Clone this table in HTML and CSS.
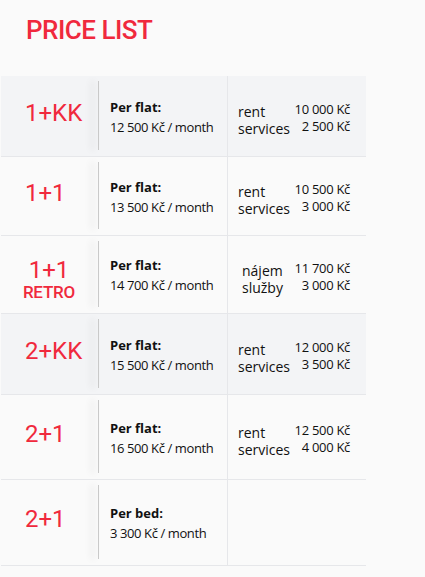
FILE: index.html
```html
<!DOCTYPE html>
<html lang="en">
<head>
<meta charset="utf-8">
<title>Price list</title>
<link rel="stylesheet" href="styles.css">
</head>
<body>
<h1 class="title">PRICE LIST</h1>
<div class="table">
  <div class="row row-alt r1">
    <div class="type"><span class="type-name">1+KK</span></div>
    <div class="divider"></div>
    <div class="flat"><b class="flat-label">Per flat:</b><span class="flat-price">12 500 Kč / month</span></div>
    <div class="fees">
      <div class="fee-labels"><span>rent</span><span>services</span></div>
      <div class="fee-amounts"><span>10 000 Kč</span><span>2 500 Kč</span></div>
    </div>
  </div>
  <div class="row r2">
    <div class="type"><span class="type-name">1+1</span></div>
    <div class="divider"></div>
    <div class="flat"><b class="flat-label">Per flat:</b><span class="flat-price">13 500 Kč / month</span></div>
    <div class="fees">
      <div class="fee-labels"><span>rent</span><span>services</span></div>
      <div class="fee-amounts"><span>10 500 Kč</span><span>3 000 Kč</span></div>
    </div>
  </div>
  <div class="row r3">
    <div class="type type-retro"><span class="type-name">1+1</span><span class="type-sub">RETRO</span></div>
    <div class="divider"></div>
    <div class="flat"><b class="flat-label">Per flat:</b><span class="flat-price">14 700 Kč / month</span></div>
    <div class="fees fees-cz">
      <div class="fee-labels"><span>nájem</span><span>služby</span></div>
      <div class="fee-amounts"><span>11 700 Kč</span><span>3 000 Kč</span></div>
    </div>
  </div>
  <div class="row row-alt r4">
    <div class="type"><span class="type-name">2+KK</span></div>
    <div class="divider"></div>
    <div class="flat"><b class="flat-label">Per flat:</b><span class="flat-price">15 500 Kč / month</span></div>
    <div class="fees">
      <div class="fee-labels"><span>rent</span><span>services</span></div>
      <div class="fee-amounts"><span>12 000 Kč</span><span>3 500 Kč</span></div>
    </div>
  </div>
  <div class="row r5">
    <div class="type"><span class="type-name">2+1</span></div>
    <div class="divider"></div>
    <div class="flat"><b class="flat-label">Per flat:</b><span class="flat-price">16 500 Kč / month</span></div>
    <div class="fees">
      <div class="fee-labels"><span>rent</span><span>services</span></div>
      <div class="fee-amounts"><span>12 500 Kč</span><span>4 000 Kč</span></div>
    </div>
  </div>
  <div class="row r6">
    <div class="type"><span class="type-name">2+1</span></div>
    <div class="divider"></div>
    <div class="flat"><b class="flat-label">Per bed:</b><span class="flat-price">3 300 Kč / month</span></div>
    <div class="fees"></div>
  </div>
</div>
</body>
</html>
```

FILE: styles.css
```css
* { box-sizing: border-box; }

html, body {
  margin: 0;
  padding: 0;
  background: #fafafa;
}

body {
  font-family: "Open Sans", "Noto Sans", sans-serif;
  color: #111;
}

.title {
  margin: 15px 0 31px 0;
  padding-left: 26px;
  font-family: Roboto, "Liberation Sans", sans-serif;
  font-weight: 500;
  font-size: 26px;
  line-height: 30px;
  letter-spacing: -0.5px;
  color: #f0293d;
}

.table {
  margin-left: 1px;
  width: 365px;
}

.row {
  display: flex;
  border-bottom: 1px solid #e6e7ea;
  background: #fafafa;
}

.row-alt { background: #f3f4f6; }

.r1 { height: 81px; }
.r2 { height: 79px; }
.r3 { height: 78px; }
.r4 { height: 81px; }
.r5 { height: 85px; }
.r6 { height: 86px; }

.type {
  width: 97px;
  display: flex;
  flex-direction: column;
  justify-content: center;
  align-items: flex-start;
  padding-left: 24px;
  padding-bottom: 7px;
  font-family: Roboto, "Liberation Sans", sans-serif;
  color: #f0293d;
}

.type-name {
  display: block;
  font-size: 24px;
  line-height: 28px;
  text-align: center;
}

.type-retro {
  align-items: center;
  width: 97px;
  padding-left: 2px;
  padding-right: 3px;
  padding-bottom: 0;
  padding-top: 10px;
}

.type-retro .type-name { line-height: 24px; }

.type-sub {
  display: block;
  font-size: 17px;
  font-weight: 500;
  line-height: 20px;
  letter-spacing: -0.2px;
}

.divider {
  width: 1px;
  flex: none;
  margin: 5px 0 6px;
  background: #c9c9c9;
  box-shadow: -6px 0 7px 1px rgba(0, 0, 0, 0.07);
}

.flat {
  width: 128px;
  display: flex;
  flex-direction: column;
  justify-content: center;
  padding-left: 11px;
  padding-top: 2px;
}

.flat-label {
  font-size: 13px;
  font-weight: 700;
  line-height: 20px;
}

.flat-price {
  font-size: 13px;
  letter-spacing: -0.4px;
  line-height: 21px;
  white-space: nowrap;
}

.fees {
  flex: 1;
  border-left: 1px solid #e6e7ea;
  display: flex;
  justify-content: space-between;
  align-items: center;
  padding: 8px 16px 0 10px;
}

.fee-labels,
.fee-amounts {
  display: flex;
  flex-direction: column;
  white-space: nowrap;
}

.fee-labels {
  font-size: 14px;
  line-height: 17px;
}

.fees-cz .fee-labels { padding-left: 4px; }

.fee-amounts {
  align-items: flex-end;
  font-size: 13px;
  letter-spacing: -0.3px;
  line-height: 17px;
  margin-top: -4px;
}
```
